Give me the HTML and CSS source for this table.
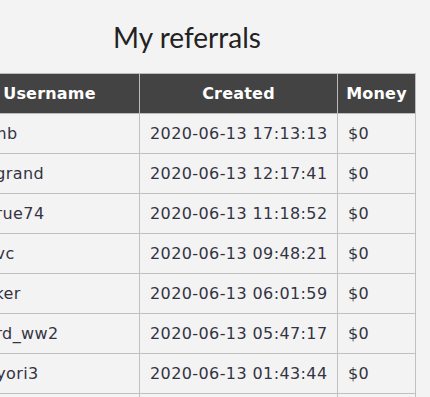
FILE: index.html
```html
<!DOCTYPE html>
<html>
<head>
<meta charset="utf-8">
<link rel="stylesheet" href="styles.css">
</head>
<body>
<div class="wrap">
  <h1 class="title">My referrals</h1>
  <table class="refs">
    <colgroup>
      <col class="c-user"><col class="c-created"><col class="c-money">
    </colgroup>
    <thead>
      <tr><th>Username</th><th>Created</th><th>Money</th></tr>
    </thead>
    <tbody>
      <tr><td>numb</td><td>2020-06-13 17:13:13</td><td>$0</td></tr>
      <tr><td>leagrand</td><td>2020-06-13 12:17:41</td><td>$0</td></tr>
      <tr><td>sotrue74</td><td>2020-06-13 11:18:52</td><td>$0</td></tr>
      <tr><td>bolvc</td><td>2020-06-13 09:48:21</td><td>$0</td></tr>
      <tr><td>Moker</td><td>2020-06-13 06:01:59</td><td>$0</td></tr>
      <tr><td>Ward_ww2</td><td>2020-06-13 05:47:17</td><td>$0</td></tr>
      <tr><td>mayori3</td><td>2020-06-13 01:43:44</td><td>$0</td></tr>
      <tr><td>mmtt</td><td>2020-06-12 23:10:05</td><td>$0</td></tr>
    </tbody>
  </table>
</div>
</body>
</html>
```
FILE: styles.css
```css
html, body {
  margin: 0;
  padding: 0;
  background: #f3f3f3;
  overflow: hidden;
}
.wrap {
  width: 456px;
  margin-left: -41px;
}
.title {
  font-family: Lato, "Open Sans", sans-serif;
  font-weight: 400;
  font-size: 28px;
  line-height: 34px;
  color: #222;
  text-align: center;
  margin: 20px 0 19px;
}
.refs {
  width: 456px;
  border-collapse: collapse;
  font-family: "DejaVu Sans", Verdana, sans-serif;
  font-size: 16px;
  table-layout: fixed;
}
.c-user { width: 180px; }
.c-created { width: 198px; }
.c-money { width: 78px; }
.refs th {
  background: #434343;
  color: #fff;
  font-weight: bold;
  height: 39px;
  padding: 0;
  border: 1px solid #bbb;
  text-align: center;
  white-space: nowrap;
  letter-spacing: 0.2px;
}
.refs td {
  height: 39px;
  padding: 0 0 0 10px;
  border: 1px solid #c0c0c0;
  color: #333344;
  text-align: left;
  white-space: nowrap;
  overflow: hidden;
  letter-spacing: 0.4px;
}
```
